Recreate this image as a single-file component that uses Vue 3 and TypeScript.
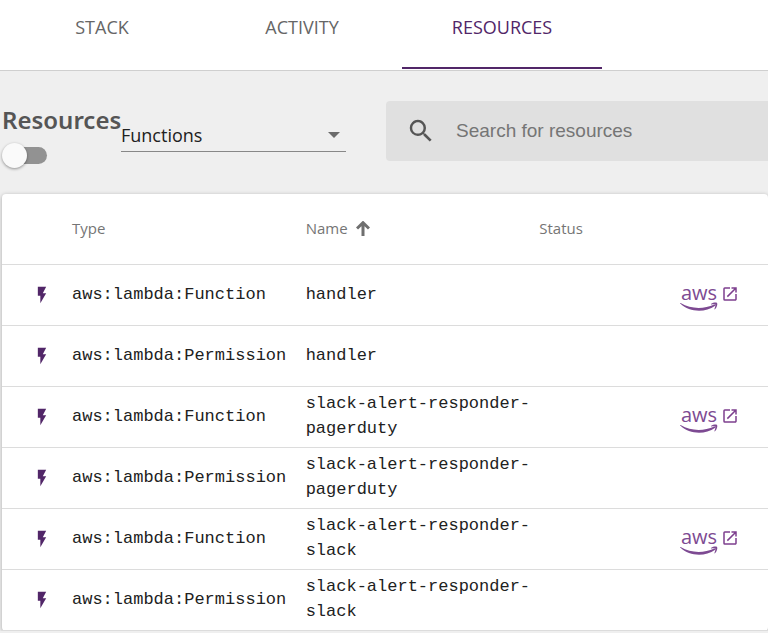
<script setup lang="ts">
import { ref } from 'vue'

interface Resource {
  type: string
  name: string
  linked: boolean
}

const tabs: string[] = ['STACK', 'ACTIVITY', 'RESOURCES']
const active = ref('RESOURCES')
const filter = ref('Functions')
const query = ref('')
const enabled = ref(false)

const resources: Resource[] = [
  { type: 'aws:lambda:Function', name: 'handler', linked: true },
  { type: 'aws:lambda:Permission', name: 'handler', linked: false },
  { type: 'aws:lambda:Function', name: 'slack-alert-responder-pagerduty', linked: true },
  { type: 'aws:lambda:Permission', name: 'slack-alert-responder-pagerduty', linked: false },
  { type: 'aws:lambda:Function', name: 'slack-alert-responder-slack', linked: true },
  { type: 'aws:lambda:Permission', name: 'slack-alert-responder-slack', linked: false },
]
</script>

<template>
  <div class="page">
    <nav class="tabs">
      <button
        v-for="tab in tabs"
        :key="tab"
        type="button"
        class="tab"
        :class="{ active: tab === active }"
        @click="active = tab"
      >{{ tab }}</button>
    </nav>

    <div class="toolbar">
      <div class="heading">
        <h1 id="resources-title">Resources</h1>
        <input v-model="enabled" class="switch" type="checkbox" role="switch" aria-labelledby="resources-title">
      </div>
      <div class="picker">
        <select v-model="filter" aria-labelledby="resources-title">
          <option>Functions</option>
        </select>
        <svg class="caret" viewBox="0 0 12 6" aria-hidden="true"><path d="M0 0h12L6 6z" /></svg>
      </div>
      <label class="search">
        <svg viewBox="0 0 24 24" aria-hidden="true">
          <path d="M15.5 14h-.79l-.28-.27A6.471 6.471 0 0 0 16 9.5 6.5 6.5 0 1 0 9.5 16c1.61 0 3.09-.59 4.23-1.57l.27.28v.79l5 4.99L20.49 19l-4.99-5zm-6 0C7.01 14 5 11.99 5 9.5S7.01 5 9.5 5 14 7.01 14 9.5 11.99 14 9.5 14z" />
        </svg>
        <input v-model="query" type="text" placeholder="Search for resources">
      </label>
    </div>

    <div class="card">
      <table>
        <colgroup>
          <col class="col-icon">
          <col class="col-type">
          <col class="col-name">
          <col>
          <col class="col-link">
        </colgroup>
        <thead>
          <tr>
            <th></th>
            <th scope="col">Type</th>
            <th scope="col" aria-sort="ascending">
              <button type="button" class="sort">
                Name
                <svg viewBox="0 0 14 15" aria-hidden="true"><path d="M1 7.5 7 1.7l6 5.8M7 2v13" /></svg>
              </button>
            </th>
            <th scope="col">Status</th>
            <th></th>
          </tr>
        </thead>
        <tbody>
          <tr v-for="resource in resources" :key="resource.type + resource.name">
            <td class="icon-cell">
              <svg class="bolt" viewBox="0 0 24 24" aria-hidden="true"><path d="M7 2v11h3v9l7-12h-4l4-8z" /></svg>
            </td>
            <td class="mono">{{ resource.type }}</td>
            <td class="mono">{{ resource.name }}</td>
            <td></td>
            <td>
              <a v-if="resource.linked" href="#" class="aws">
                <svg class="aws-logo" viewBox="0 -8 40 34">
                  <text x="1" y="14">aws</text>
                  <path d="M.6 17.1c10.5 6.1 22.6 6.4 33.7 1.5 1-.5 1.8.5.9 1.2C24.6 27.2 9.7 26.4.2 17.6c-.3-.4 0-.7.4-.5z" />
                  <path d="M31 18c2-1.5 5.2-1.7 6-1 .8.8-.1 4.6-2 6.3-.4.3-.8.1-.6-.3.7-1.5 1.3-3.8.9-4.4-.4-.5-2.6-.3-3.9-.1-.5 0-.7-.3-.4-.5z" />
                </svg>
                <svg class="open" viewBox="0 0 24 24" aria-hidden="true">
                  <path d="M19 19H5V5h7V3H5a2 2 0 0 0-2 2v14a2 2 0 0 0 2 2h14c1.1 0 2-.9 2-2v-7h-2v7zM14 3v2h3.59l-9.83 9.83 1.41 1.41L19 6.41V10h2V3h-7z" />
                </svg>
              </a>
            </td>
          </tr>
        </tbody>
      </table>
    </div>
  </div>
</template>

<style>
body {
  background: #efefef;
}
</style>

<style scoped>
.page {
  font-family: "Open Sans", "Noto Sans", sans-serif;
  font-size: 18px;
  color: #212121;
  overflow: hidden;
}

button,
select,
input {
  font: inherit;
  color: inherit;
  margin: 0;
  padding: 0;
  border: 0;
  border-radius: 0;
  background: none;
  outline: none;
}

button {
  cursor: pointer;
}

.tabs {
  display: flex;
  padding: 0 2px 1px;
  background: #fff;
  border-bottom: 1px solid #cfcfcf;
}

.tab {
  width: 200px;
  padding: 15px 0 28px;
  border-bottom: 2px solid transparent;
  line-height: 24px;
  color: #666;
}

.tab.active {
  color: #512668;
  border-color: #512668;
}

.toolbar {
  display: flex;
  align-items: flex-start;
  padding: 30px 0 26px 2px;
}

.heading {
  width: 119px;
}

h1 {
  margin: 0 0 4px;
  font-family: "Noto Sans", sans-serif;
  font-size: 24px;
  font-weight: 600;
  line-height: 38px;
  color: #555;
}

.switch {
  appearance: none;
  display: grid;
  width: 45px;
  height: 25px;
}

.switch::before,
.switch::after {
  content: "";
  grid-area: 1 / 1;
  align-self: center;
}

.switch::before {
  height: 17px;
  margin-left: 4px;
  border-radius: 9px;
  background: #929292;
}

.switch::after {
  width: 25px;
  height: 25px;
  border-radius: 50%;
  background: #fafafa;
  box-shadow: 0 1px 3px rgba(0, 0, 0, 0.4);
}

.switch:checked::after {
  justify-self: end;
}

.picker {
  display: grid;
  align-items: center;
  width: 225px;
  margin-right: 40px;
  padding-top: 18px;
  border-bottom: 1px solid #888;
}

.picker > * {
  grid-area: 1 / 1;
}

select {
  appearance: none;
  width: 100%;
  height: 32px;
}

.caret {
  justify-self: end;
  width: 12px;
  margin-right: 6px;
  fill: #6b6b6b;
  pointer-events: none;
}

.search {
  display: flex;
  align-items: center;
  flex: 1;
  min-width: 0;
  height: 60px;
  padding-left: 20px;
  gap: 20px;
  border-radius: 4px 0 0 4px;
  background: #e0e0e0;
}

.search svg {
  flex: none;
  width: 30px;
  height: 30px;
  fill: #555;
}

.search input {
  flex: 1;
  min-width: 0;
  height: 40px;
  font-family: "Liberation Sans", Arial, sans-serif;
  font-size: 19px;
}

.search input::placeholder {
  color: #757575;
  opacity: 1;
}

.card {
  margin-left: 2px;
  background: #fff;
  border-radius: 4px;
  box-shadow: 0 1px 4px rgba(0, 0, 0, 0.3);
}

table {
  width: 100%;
  table-layout: fixed;
  border-collapse: separate;
  border-spacing: 0;
}

.col-icon {
  width: 70px;
}

.col-type,
.col-name {
  width: 30.5%;
}

.col-link {
  width: 88px;
}

th,
td {
  padding: 0;
  text-align: left;
  vertical-align: middle;
  border-bottom: 1px solid #dcdcdc;
}

th {
  height: 68px;
  padding-bottom: 2px;
  font-size: 15px;
  font-weight: 400;
  color: #757575;
}

td {
  height: 60px;
}

.sort {
  display: flex;
  align-items: center;
  gap: 8px;
}

.sort svg {
  width: 14px;
  height: 15px;
  fill: none;
  stroke: #6f6f6f;
  stroke-width: 3;
}

.mono {
  height: 58px;
  padding-bottom: 2px;
  font-family: "Liberation Mono", monospace;
  font-size: 17px;
  line-height: 25px;
}

.icon-cell {
  padding-left: 30px;
}

.bolt {
  display: block;
  width: 20px;
  height: 20px;
  fill: #512668;
}

.aws {
  display: flex;
  align-items: flex-start;
  gap: 1px;
  text-decoration: none;
}

.aws-logo {
  width: 40px;
  height: 34px;
  fill: #7d4a92;
}

.aws-logo text {
  font-size: 20px;
  font-weight: 500;
}

.open {
  width: 18px;
  height: 18px;
  margin-top: 7px;
  fill: #7d3f8e;
}
</style>
